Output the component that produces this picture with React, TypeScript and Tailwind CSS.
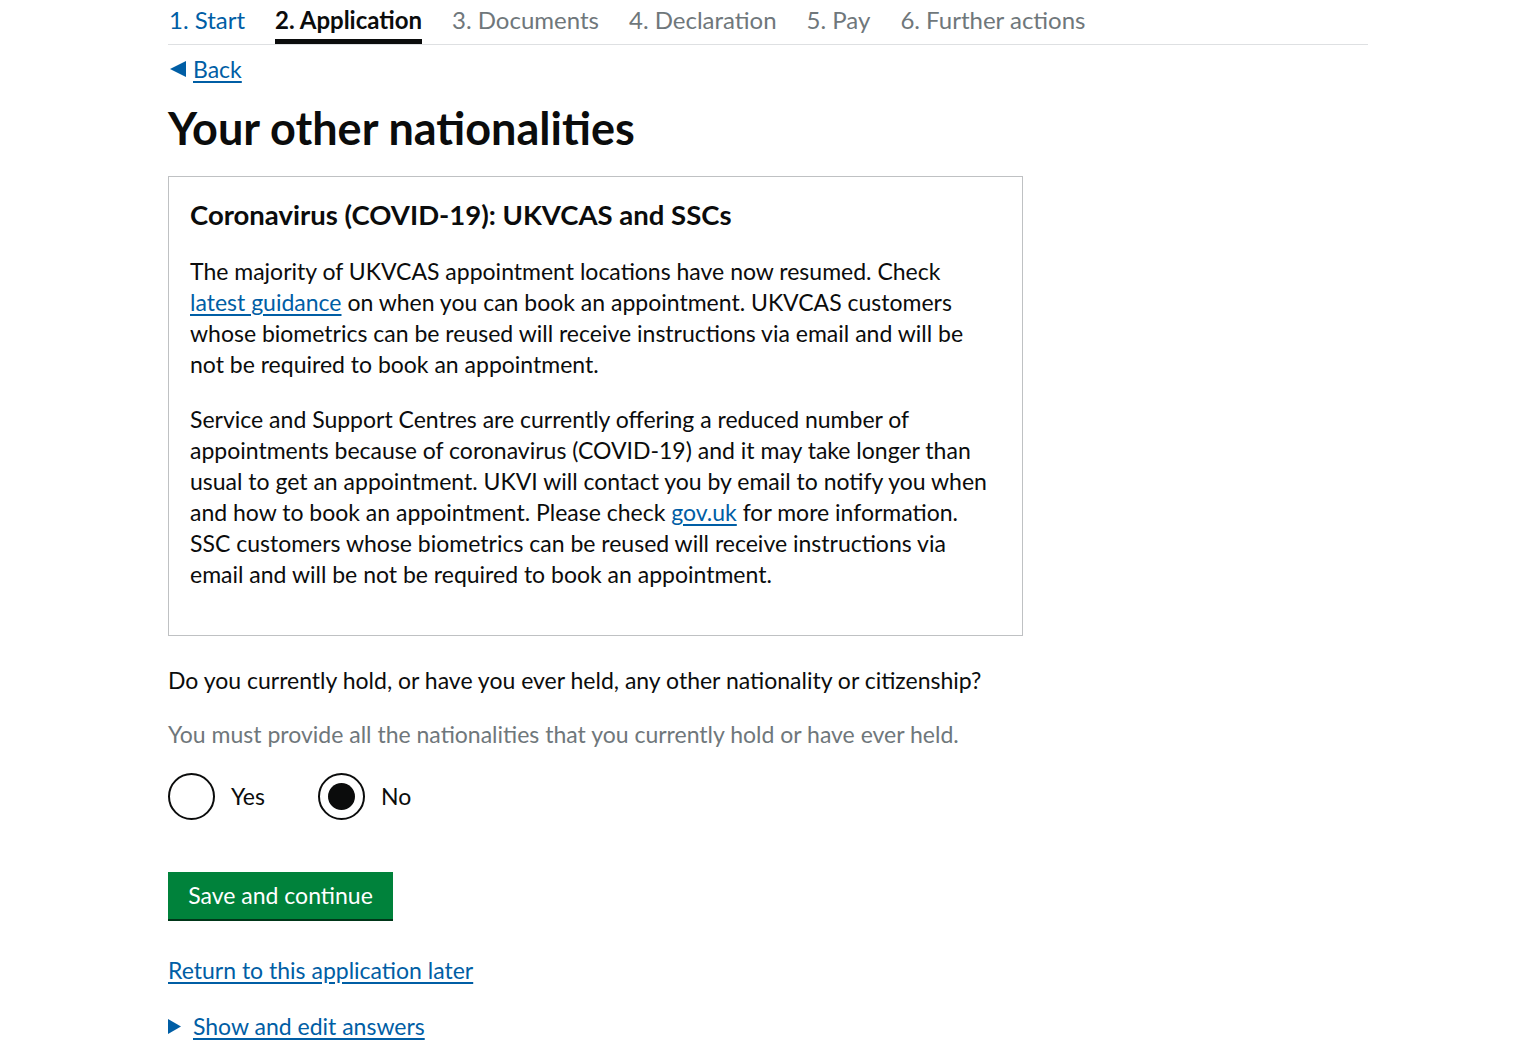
const font = { fontFamily: "Lato, 'Noto Sans', Arial, sans-serif" };

function Radio({ label, checked }: { label: string; checked?: boolean }) {
  return (
    <label className="flex items-center gap-[16px]">
      <span className="flex h-[47px] w-[47px] items-center justify-center rounded-full border-2 border-[#0b0c0c] bg-white">
        {checked && <span className="h-[27px] w-[27px] rounded-full bg-[#0b0c0c]" />}
      </span>
      <span className="text-[23px] text-[#0b0c0c]">{label}</span>
    </label>
  );
}

export default function App() {
  const steps = ["1. Start", "2. Application", "3. Documents", "4. Declaration", "5. Pay", "6. Further actions"];
  return (
    <div className="min-h-screen bg-white text-[#0b0c0c]" style={font}>
      <div className="mx-auto w-[1200px]">
        <nav className="flex gap-[30px] border-b border-[#dee0e2] text-[24px]">
          {steps.map((s, i) => (
            <div
              key={s}
              className={
                i === 1
                  ? "h-[44px] border-b-[5px] border-[#0b0c0c] pt-[3px] leading-[33px] font-bold text-[#0b0c0c]"
                  : i === 0
                  ? "h-[44px] pt-[3px] pl-[1px] leading-[33px] text-[#005ea5]"
                  : "h-[44px] pt-[3px] leading-[33px] text-[#6f777b]"
              }
            >
              {s}
            </div>
          ))}
        </nav>

        <a href="#" className="mt-[8px] flex items-center gap-[7px] text-[23px] leading-[32px] text-[#005ea5]">
          <svg width="16" height="16" viewBox="0 0 16 16" className="ml-[2px]">
            <path d="M0 8 L16 0 L16 16 Z" fill="#005ea5" />
          </svg>
          <span className="underline underline-offset-[3px]">Back</span>
        </a>

        <h1 className="mt-[15px] text-[45px] font-bold leading-[56px]">Your other nationalities</h1>

        <div className="mt-[20px] w-[855px] border border-[#bfc1c3] px-[21px] pt-[22px] pb-[45px]">
          <h2 className="text-[27.5px] font-bold leading-[32px]">Coronavirus (COVID-19): UKVCAS and SSCs</h2>
          <p className="mt-[25px] text-[23px] leading-[31px]">
            The majority of UKVCAS appointment locations have now resumed. Check
            <br />
            <a href="#" className="text-[#005ea5] underline underline-offset-[3px]">latest guidance</a> on when you
            can book an appointment. UKVCAS customers
            <br />
            whose biometrics can be reused will receive instructions via email and will be
            <br />
            not be required to book an appointment.
          </p>
          <p className="mt-[24px] text-[23px] leading-[31px]">
            Service and Support Centres are currently offering a reduced number of
            <br />
            appointments because of coronavirus (COVID-19) and it may take longer than
            <br />
            usual to get an appointment. UKVI will contact you by email to notify you when
            <br />
            and how to book an appointment. Please check{" "}
            <a href="#" className="text-[#005ea5] underline underline-offset-[3px]">gov.uk</a> for more information.
            <br />
            SSC customers whose biometrics can be reused will receive instructions via
            <br />
            email and will be not be required to book an appointment.
          </p>
        </div>

        <p className="mt-[29px] text-[23px] leading-[31px]">
          Do you currently hold, or have you ever held, any other nationality or citizenship?
        </p>
        <p className="mt-[23px] text-[23px] leading-[31px] text-[#6f777b]">
          You must provide all the nationalities that you currently hold or have ever held.
        </p>

        <div className="mt-[23px] flex gap-[53px]">
          <Radio label="Yes" />
          <Radio label="No" checked />
        </div>

        <button className="mt-[52px] block h-[47px] w-[225px] bg-[#00823b] text-[23px] text-white shadow-[0_2px_0_#003618]">
          Save and continue
        </button>

        <a href="#" className="mt-[36px] inline-block text-[23px] leading-[31px] text-[#005ea5] underline underline-offset-[3px]">
          Return to this application later
        </a>

        <div className="mt-[25px] flex items-center gap-[12px] text-[23px] leading-[31px] text-[#005ea5]">
          <svg width="13" height="15" viewBox="0 0 13 15">
            <path d="M0 0 L13 7.5 L0 15 Z" fill="#005ea5" />
          </svg>
          <a href="#" className="underline underline-offset-[3px]">Show and edit answers</a>
        </div>
      </div>
    </div>
  );
}
